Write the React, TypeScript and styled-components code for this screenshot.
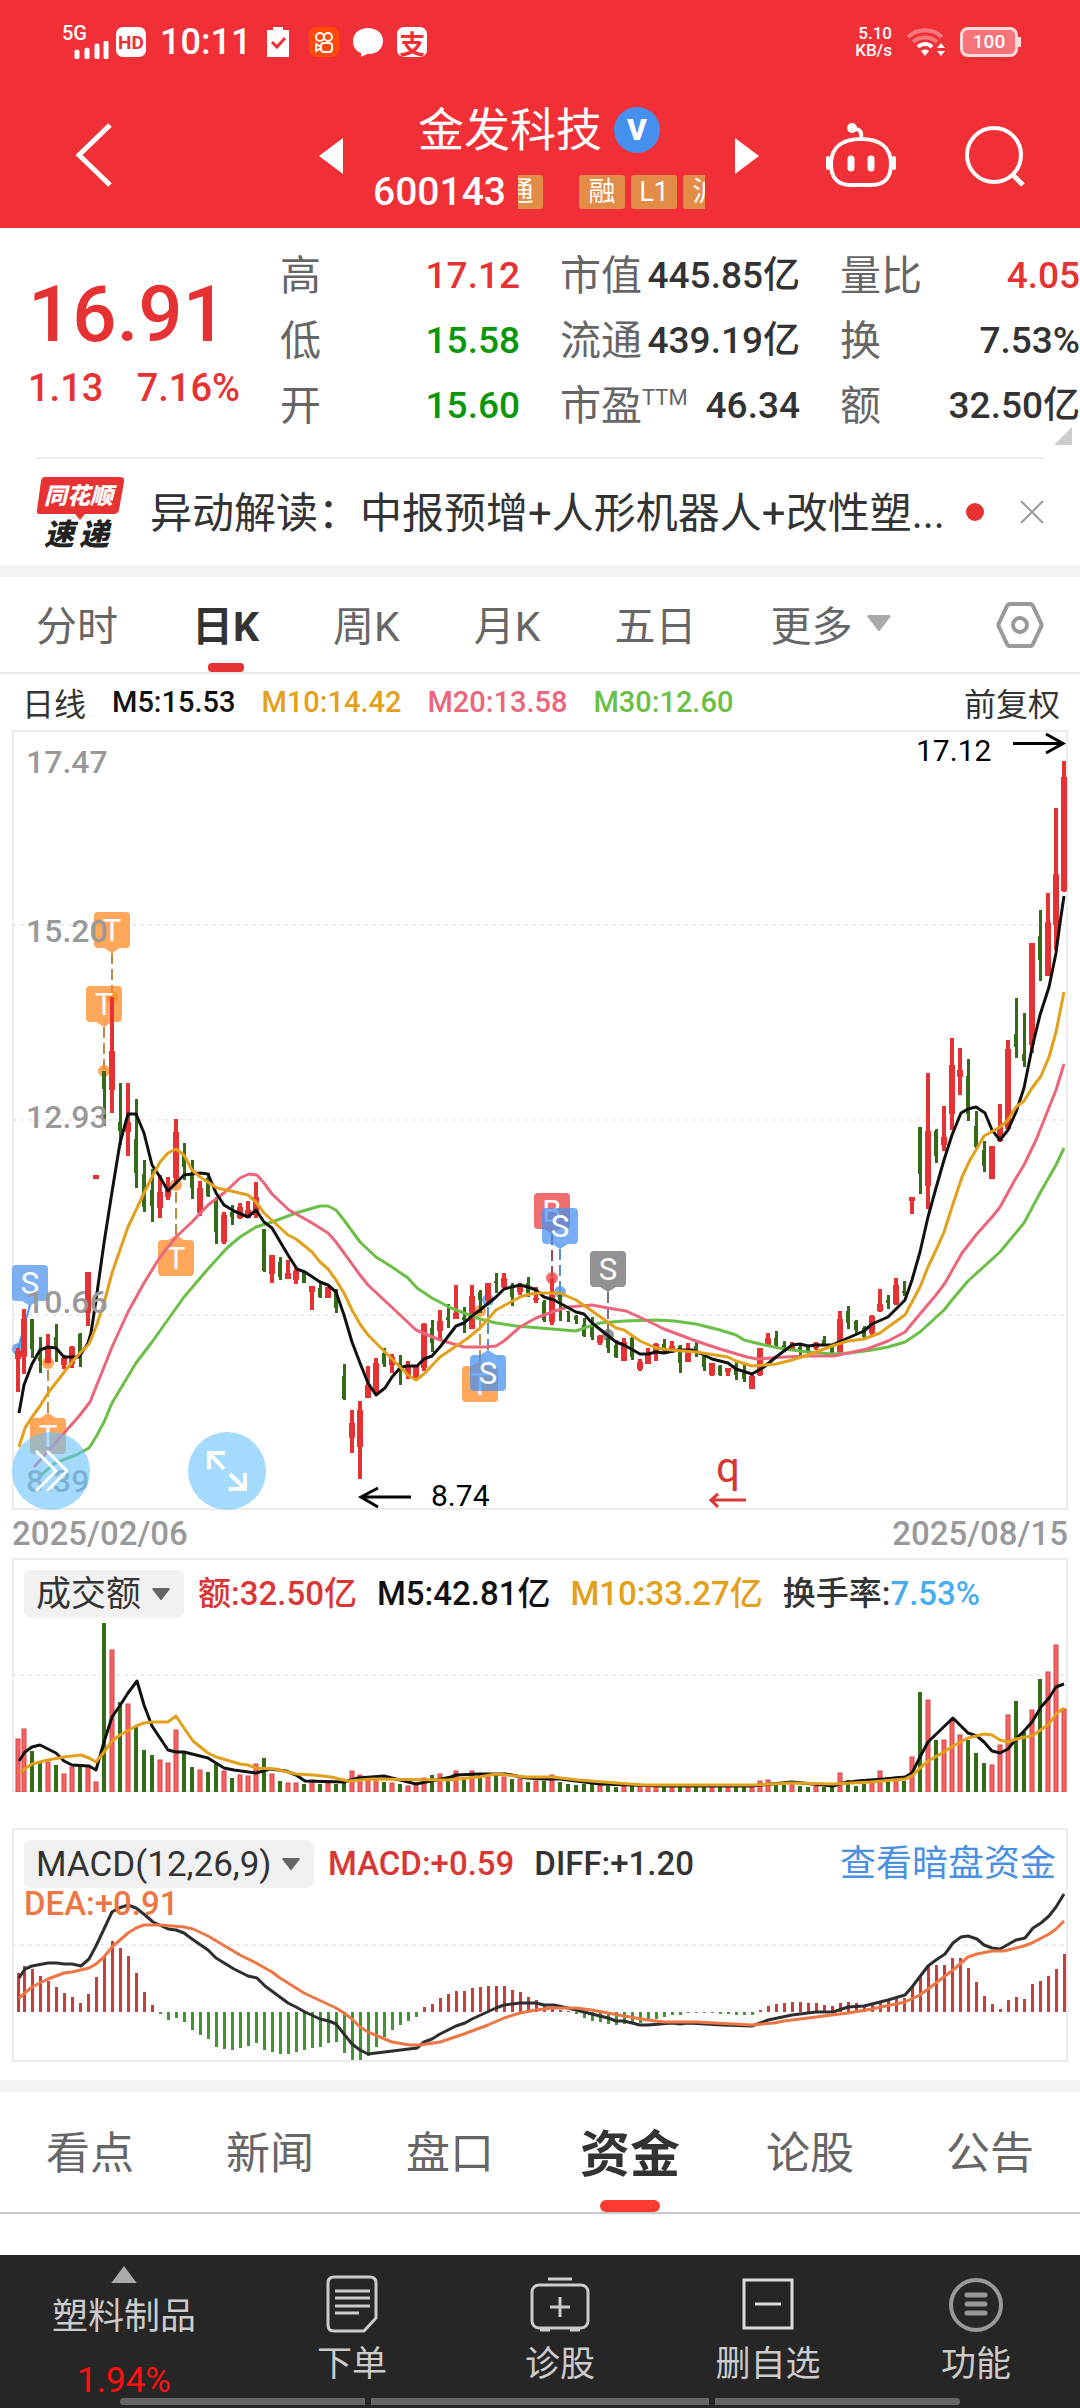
import styled, { createGlobalStyle } from "styled-components";

const RED = "#e63232";
const GREEN = "#336b17";

// [rising, high, body top, body bottom, low, turnover, macd]
type Candle = [number, number, number, number, number, number, number];

const candles: Candle[] = [
	[1, 617, 620, 628, 661, 53, 39], [1, 578, 588, 626, 643, 63, 46], [0, 588, 588, 618, 627, 41, 43],
	[0, 606, 626, 630, 642, 29, 36], [1, 603, 617, 632, 632, 30, 31], [0, 593, 606, 618, 631, 27, 25],
	[1, 624, 627, 634, 638, 18, 19], [1, 615, 616, 633, 637, 25, 15], [0, 602, 603, 625, 636, 27, 9],
	[1, 541, 541, 582, 595, 25, 18], [1, 444, 444, 448, 448, 10, 35], [0, 340, 340, 358, 395, 169, 57],
	[1, 266, 320, 359, 382, 142, 71], [0, 352, 391, 400, 414, 90, 64], [1, 352, 391, 401, 425, 88, 56],
	[0, 368, 408, 442, 457, 66, 39], [0, 429, 443, 476, 481, 42, 20], [0, 438, 459, 475, 491, 37, 7],
	[1, 444, 461, 477, 487, 32, -2], [1, 446, 457, 466, 469, 29, -8], [1, 388, 401, 447, 451, 62, -6],
	[0, 412, 421, 436, 449, 39, -10], [0, 429, 442, 457, 468, 25, -18], [1, 450, 457, 482, 485, 22, -23],
	[0, 442, 447, 465, 466, 20, -27], [0, 466, 469, 501, 513, 28, -35], [1, 481, 484, 511, 513, 21, -37],
	[0, 474, 481, 486, 494, 14, -38], [1, 472, 476, 487, 488, 17, -36], [1, 470, 479, 487, 487, 16, -34],
	[1, 451, 466, 484, 487, 28, -31], [0, 498, 498, 540, 541, 34, -38], [1, 524, 524, 543, 552, 18, -40],
	[0, 526, 531, 546, 549, 11, -42], [1, 529, 542, 548, 548, 9, -42], [1, 536, 540, 549, 553, 9, -40],
	[0, 541, 541, 552, 552, 8, -38], [1, 555, 555, 561, 579, 12, -36], [0, 552, 557, 566, 567, 8, -35],
	[1, 556, 556, 567, 567, 9, -31], [0, 558, 559, 577, 582, 8, -30], [0, 633, 645, 668, 669, 10, -41],
	[1, 679, 692, 707, 722, 21, -48], [1, 670, 679, 716, 748, 17, -48], [1, 635, 654, 667, 667, 14, -44],
	[1, 627, 632, 662, 664, 13, -35], [0, 617, 622, 633, 636, 10, -25], [1, 623, 626, 634, 642, 9, -18],
	[0, 624, 632, 635, 654, 8, -13], [1, 630, 636, 644, 648, 6, -9], [1, 635, 635, 647, 648, 7, -5],
	[1, 592, 593, 637, 640, 14, 5], [0, 589, 597, 612, 621, 17, 8], [1, 579, 590, 600, 609, 18, 14],
	[0, 573, 586, 589, 597, 13, 18], [1, 554, 582, 588, 588, 21, 21], [0, 576, 586, 589, 602, 15, 21],
	[1, 554, 565, 598, 598, 21, 24], [0, 559, 561, 569, 582, 17, 25], [1, 552, 552, 569, 571, 15, 26],
	[0, 542, 550, 552, 562, 17, 26], [1, 542, 547, 556, 557, 15, 26], [0, 552, 554, 566, 575, 13, 22],
	[1, 552, 556, 561, 564, 13, 20], [0, 546, 552, 562, 566, 10, 15], [1, 556, 567, 569, 572, 11, 12],
	[0, 569, 571, 589, 591, 11, 7], [1, 547, 564, 591, 594, 17, 4], [0, 562, 564, 569, 590, 10, 2],
	[0, 580, 580, 581, 591, 8, 1], [0, 584, 585, 589, 593, 7, -2], [0, 587, 594, 605, 606, 8, -6],
	[0, 586, 594, 606, 609, 8, -9], [1, 604, 605, 612, 614, 7, -10], [0, 604, 607, 617, 622, 6, -12],
	[0, 609, 614, 626, 627, 5, -13], [1, 607, 611, 630, 630, 6, -12], [0, 606, 607, 626, 629, 6, -11],
	[1, 628, 631, 638, 640, 7, -11], [1, 617, 622, 633, 633, 6, -9], [1, 612, 613, 622, 630, 6, -7],
	[0, 608, 613, 620, 621, 5, -5], [1, 610, 615, 620, 622, 7, -3], [0, 614, 615, 632, 642, 5, -3],
	[1, 612, 619, 631, 631, 6, -1], [0, 609, 615, 622, 626, 6, -1], [0, 622, 625, 636, 640, 6, -1],
	[1, 632, 632, 644, 645, 5, -1], [0, 634, 635, 644, 645, 5, -2], [1, 637, 637, 641, 645, 5, -2],
	[0, 630, 634, 644, 649, 5, -3], [0, 633, 642, 648, 651, 5, -3], [1, 644, 645, 658, 658, 5, -3],
	[1, 617, 617, 644, 645, 11, 2], [1, 602, 607, 614, 614, 12, 6], [0, 600, 607, 614, 616, 7, 8],
	[0, 610, 614, 619, 621, 7, 9], [1, 611, 614, 619, 620, 7, 10], [0, 614, 616, 619, 624, 6, 10],
	[0, 614, 616, 622, 624, 5, 9], [1, 611, 612, 617, 619, 6, 9], [0, 605, 609, 613, 614, 5, 7],
	[0, 614, 616, 622, 622, 5, 6], [1, 580, 588, 621, 622, 19, 9], [0, 575, 580, 592, 598, 12, 10],
	[0, 589, 590, 599, 602, 6, 9], [0, 595, 597, 606, 607, 8, 7], [1, 584, 585, 602, 604, 9, 9],
	[1, 558, 573, 580, 581, 21, 10], [0, 564, 569, 572, 578, 10, 11], [1, 547, 554, 573, 574, 15, 14],
	[0, 550, 560, 562, 565, 11, 14], [1, 466, 466, 470, 483, 35, 25], [0, 396, 396, 443, 463, 100, 36],
	[1, 342, 400, 455, 478, 92, 46], [0, 398, 400, 425, 432, 52, 47], [1, 375, 406, 414, 420, 52, 47],
	[1, 307, 334, 383, 399, 73, 54], [1, 317, 339, 346, 364, 57, 54], [0, 328, 345, 383, 390, 52, 44],
	[0, 380, 395, 416, 417, 39, 30], [0, 410, 419, 435, 441, 29, 16], [1, 415, 415, 448, 448, 27, 8],
	[1, 373, 396, 410, 411, 47, 3], [1, 309, 318, 398, 398, 77, 12], [0, 267, 303, 316, 327, 91, 15],
	[0, 282, 323, 330, 336, 60, 13], [1, 212, 212, 314, 322, 82, 28], [0, 179, 205, 229, 250, 113, 31],
	[1, 162, 191, 245, 245, 120, 36], [1, 77, 143, 194, 219, 147, 43], [1, 30, 46, 160, 161, 83, 58],
];

const priceLines = [
	{
		color: "#6bbf47",
		points:
			"28,745 43,732 64,724 77,717 84,706 92,691 100,672 124,632 140,611 172,566 195,539 215,517 228,506 244,496 260,491 284,482 308,475 316,475 324,479 332,489 348,511 364,526 380,536 396,547 405,557 420,567 439,577 468,588 484,592 504,595 528,597 564,600 572,597 588,592 612,590 644,589 662,590 684,593 708,599 724,604 732,609 748,613 772,618 796,621 820,623 838,622 860,619 876,616 893,611 908,601 932,579 940,569 956,550 988,521 1012,492 1028,462 1044,434 1052,417",
	},
	{
		color: "#eb667b",
		points:
			"22,736 53,701 68,684 78,671 84,656 100,616 116,581 132,552 148,526 164,506 180,491 196,474 212,462 228,447 237,443 245,444 252,452 260,463 277,479 300,492 316,502 324,511 348,544 356,554 372,569 387,583 404,599 428,609 452,616 474,616 484,615 492,610 508,596 524,587 540,581 556,576 580,574 596,577 614,580 636,590 652,598 684,610 708,618 735,626 745,628 772,626 796,625 822,625 836,622 855,618 876,610 893,601 908,583 924,564 933,552 950,522 964,504 980,486 988,476 1004,447 1012,434 1024,409 1034,384 1044,359 1052,333",
	},
	{
		color: "#111",
		points:
			"7,682 12,654 20,633 28,619 36,616 44,617 52,626 67,626 76,612 79,602 84,569 92,512 100,461 108,412 116,383 124,383 132,402 140,434 148,446 156,460 164,452 172,444 188,442 196,443 204,462 212,474 222,480 236,486 244,479 252,491 260,497 276,524 285,538 293,541 308,551 316,554 324,561 332,584 340,611 348,632 356,652 364,664 373,657 380,646 388,637 394,635 405,635 412,628 420,625 428,616 444,595 452,592 460,585 468,579 484,566 492,558 508,554 516,556 524,559 532,566 542,569 564,581 572,583 580,592 604,611 612,614 628,623 636,623 644,621 652,622 666,619 680,619 690,623 700,628 716,632 724,638 740,643 752,636 764,626 780,614 788,613 796,615 804,614 820,614 836,607 852,600 860,593 876,586 893,569 900,549 908,521 916,486 924,457 932,429 940,404 949,382 956,378 964,376 973,382 980,399 988,409 996,399 1004,381 1012,357 1020,317 1028,284 1037,256 1044,222 1048,192 1052,165",
	},
	{
		color: "#e2a01b",
		points:
			"7,716 13,697 20,686 28,675 36,662 60,631 68,622 77,613 84,596 92,572 100,542 116,496 132,462 140,446 148,431 156,422 164,418 172,424 180,439 188,446 205,457 219,460 236,464 244,471 252,482 263,492 276,504 284,508 300,521 308,531 316,538 324,549 332,562 340,579 348,593 356,604 372,620 388,636 396,644 404,649 412,643 428,626 456,607 468,597 484,579 508,566 518,563 528,562 548,562 564,569 580,580 604,597 612,599 628,610 644,617 659,619 684,621 716,626 724,630 740,635 764,633 780,629 796,624 804,621 820,615 836,610 852,608 868,602 876,596 893,584 900,571 908,556 916,536 924,519 932,501 940,476 950,446 958,429 964,419 972,405 988,396 996,389 1004,376 1012,370 1020,357 1029,345 1037,326 1044,301 1052,261",
	},
];

const volumeLines = [
	{
		color: "#111",
		points:
			"7,202 13,193 20,188 28,186 36,190 44,194 52,202 60,206 77,207 84,211 92,183 100,158 109,145 116,134 125,122 132,146 140,167 156,191 164,193 172,193 196,199 212,209 222,211 244,214 258,210 274,212 284,216 293,222 332,223 346,219 372,217 404,225 439,218 444,216 467,215 494,215 515,219 532,220 548,220 588,225 649,227 740,227 780,223 821,227 831,224 845,222 872,220 893,218 900,214 908,198 916,183 941,159 956,174 965,177 972,183 980,192 988,194 996,190 1004,180 1012,172 1020,163 1029,148 1037,139 1044,128 1052,125",
	},
	{
		color: "#e2a01b",
		points:
			"7,214 20,205 36,201 52,198 69,196 77,199 84,203 92,193 100,182 108,176 124,167 132,164 140,163 156,163 164,157 172,169 181,182 196,194 204,198 228,205 236,206 244,209 263,210 284,215 301,216 319,218 336,222 360,220 436,221 467,218 484,215 515,218 540,218 566,221 631,226 741,226 780,224 821,225 859,223 893,220 900,217 908,209 916,202 932,193 941,187 956,179 972,175 980,176 988,181 996,183 1004,180 1020,177 1037,165 1044,155 1052,149",
	},
];

const macdLines = [
	{
		color: "#2e2e2e",
		points:
			"7,149 13,140 20,137 36,134 45,134 52,135 60,135 69,137 77,130 84,117 92,100 100,83 107,79 116,76 124,79 133,86 141,93 156,100 164,101 172,104 180,110 196,121 204,129 222,140 236,147 245,149 253,157 276,174 284,178 293,183 308,190 317,192 324,195 340,215 348,221 356,225 405,219 412,213 420,210 428,205 444,197 453,194 460,190 484,179 492,176 508,174 524,174 532,176 542,176 556,179 572,183 596,189 604,192 612,192 628,196 636,196 660,194 668,195 676,194 710,196 740,197 756,191 780,186 804,183 821,183 836,178 852,177 876,171 893,166 900,158 916,137 924,131 933,125 941,114 949,108 956,107 965,110 972,116 980,119 988,120 1004,111 1013,109 1021,99 1029,94 1037,87 1044,78 1052,65",
	},
	{
		color: "#ec7644",
		points:
			"7,169 20,158 36,150 52,144 60,143 77,139 84,135 92,128 100,118 116,104 124,99 132,96 148,96 172,98 181,100 196,107 228,126 244,134 260,143 268,149 292,164 324,179 332,184 340,190 348,198 356,203 380,213 398,216 408,216 428,213 452,205 476,196 492,189 508,184 524,181 540,179 564,179 580,181 612,187 636,191 652,193 684,193 740,196 762,194 772,192 804,188 836,184 860,180 893,173 908,166 916,160 941,141 956,128 965,125 980,122 992,122 1012,117 1020,114 1037,105 1044,100 1052,92",
	},
];

const axisLabels = [
	{ text: "17.47", y: 42 },
	{ text: "15.20", y: 211 },
	{ text: "12.93", y: 397 },
	{ text: "10.66", y: 582 },
	{ text: "8.39", y: 761 },
];

const markers = [
	{ letter: "T", x: 100, y: 181, dot: 266, color: "#ff8a24", line: "#bf8a45" },
	{ letter: "T", x: 92, y: 255, dot: 340, color: "#ff8a24", line: "#bf8a45" },
	{ letter: "T", x: 164, y: 509, dot: 454, color: "#ff8a24", line: "#bf8a45" },
	{ letter: "T", x: 36, y: 687, dot: 632, color: "#ff8a24", line: "#bf8a45" },
	{ letter: "T", x: 468, y: 635, dot: 580, color: "#ff8a24", line: "#bf8a45" },
	{ letter: "S", x: 476, y: 624, dot: 569, color: "#4a92ee", line: "#5590bf" },
	{ letter: "B", x: 540, y: 462, dot: 547, color: "#ea3f42", line: "#a04a4a" },
	{ letter: "S", x: 548, y: 477, dot: 561, color: "#4a92ee", line: "#5590bf" },
	{ letter: "S", x: 596, y: 520, dot: 604, color: "#6e6e6e", line: "#777" },
];

const Marker = ({ letter, x, y, dot, color, line }: (typeof markers)[number]) => {
	const above = dot > y;
	const edge = above ? y + 36 : y;
	const tip = above ? edge + 5 : edge - 5;
	return (
		<g>
			<line x1={x} y1={tip} x2={x} y2={dot} stroke={line} strokeWidth="2" strokeDasharray="11 5" />
			<circle cx={x} cy={dot} r="6" fill={color} opacity="0.75" />
			<rect x={x - 18} y={y} width="36" height="36" rx="4" fill={color} opacity="0.75" />
			<path d={`M${x - 8} ${edge}H${x + 8}L${x} ${tip}Z`} fill={color} opacity="0.75" />
			<ChartText x={x} y={y + 29} fontSize="31" fill="#fff" textAnchor="middle">
				{letter}
			</ChartText>
		</g>
	);
};

const Lines = ({ lines }: { lines: typeof priceLines }) => (
	<>
		{lines.map((line) => (
			<polyline
				key={line.color}
				points={line.points}
				fill="none"
				stroke={line.color}
				strokeWidth="3"
				strokeLinejoin="round"
			/>
		))}
	</>
);

const Frame = ({ height, guides }: { height: number; guides: number[] }) => (
	<>
		{guides.map((y) => (
			<line key={y} x1="0" y1={y} x2="1054" y2={y} stroke="#ececec" strokeWidth="2" strokeDasharray="4 4" />
		))}
		<rect x="1" y="0" width="1054" height={height} fill="none" stroke="#ececec" strokeWidth="2" />
	</>
);

const xOf = (i: number) => (i === 0 ? 6 : 4 + i * 8);

const PriceChart = () => (
	<Chart viewBox="0 -1 1056 780" role="img" aria-label="日K">
		<Frame height={778} guides={[194, 389, 584]} />
		<line x1="18" y1="574" x2="6" y2="618" stroke="#4a92ee" strokeWidth="2" />
		<circle cx="6" cy="618" r="6" fill="#4a92ee" opacity="0.75" />
		<rect x="0" y="534" width="36" height="36" rx="4" fill="#4a92ee" opacity="0.72" />
		<path d="M10 570H26L18 575Z" fill="#4a92ee" opacity="0.72" />
		<ChartText x="18" y="563" fontSize="31" fill="#fff" textAnchor="middle">
			S
		</ChartText>
		{markers.map((marker) => (
			<Marker key={marker.x} {...marker} />
		))}
		{candles.map(([up, high, top, bottom, low], i) => {
			const color = up ? RED : GREEN;
			const width = up ? 6 : 4;
			return (
				<g key={i} fill={color}>
					<rect x={xOf(i) - (up ? 2 : 1)} y={high} width={up ? 4 : 3} height={low - high} />
					<rect x={xOf(i) - width / 2} y={top} width={width} height={bottom - top} />
				</g>
			);
		})}
		<Lines lines={priceLines} />
		{axisLabels.map((label) => (
			<ChartText key={label.text} x="14" y={label.y} fontSize="32" fontWeight="500" fill="#999">
				{label.text}
			</ChartText>
		))}
		<ChartText x="904" y="30" fontSize="30" fill="#000">
			17.12
		</ChartText>
		<path d="M1001 12.5H1051M1034 3L1051 12.5L1034 22" fill="none" stroke="#000" strokeWidth="3" />
		<ChartText x="419" y="775" fontSize="30" fill="#000">
			8.74
		</ChartText>
		<path d="M399 766H349M366 757L349 766L366 776" fill="none" stroke="#000" strokeWidth="3" />
		<ChartText x="704" y="751" fontSize="42" fill="#d93636">
			q
		</ChartText>
		<path d="M734 769H699M706 763L699 769L706 776" fill="none" stroke="#d93636" strokeWidth="3" />
	</Chart>
);

const VolumeChart = () => (
	<Chart viewBox="0 -1 1056 234" role="img" aria-label="成交额">
		<Frame height={232} guides={[116]} />
		{candles.map(([up, , , , , volume], i) =>
			up ? (
				<rect
					key={i}
					x={xOf(i) - 2}
					y={233 - volume}
					width="4"
					height={volume}
					fill="#ff5f5f"
					stroke="#c94a4a"
					strokeWidth="1"
				/>
			) : (
				<rect key={i} x={xOf(i) - 2} y={233 - volume} width="4" height={volume} fill={GREEN} />
			)
		)}
		<Lines lines={volumeLines} />
	</Chart>
);

const MacdChart = () => (
	<Chart viewBox="0 -1 1056 234" role="img" aria-label="MACD">
		<Frame height={232} guides={[116]} />
		{candles.map(([, , , , , , macd], i) => (
			<rect
				key={i}
				x={xOf(i) - 1}
				y={macd > 0 ? 183 - macd : 183}
				width="3"
				height={Math.abs(macd)}
				fill={macd > 0 ? "#c93c3c" : "#409630"}
			/>
		))}
		<Lines lines={macdLines} />
	</Chart>
);

const Caret = ({ width = 18, color = "#666", up = false }) => (
	<svg width={width} height={(width * 2) / 3} viewBox="0 0 18 12" aria-hidden="true">
		<path d={up ? "M0 12L9 0L18 12Z" : "M1 0H17L18 1L9.500 12H8.500L0 1Z"} fill={color} />
	</svg>
);

const Status = () => (
	<StatusBar>
		<StatusGroup>
			<Signal>
				<span>5G</span>
				<svg width="36" height="18" viewBox="0 0 36 18" aria-hidden="true">
					<path d="M3 16V11M13 16V9M23 16V5M32 16V2" stroke="#fff" strokeWidth="5" strokeLinecap="round" />
				</svg>
			</Signal>
			<AppBadge>HD</AppBadge>
			<Clock>10:11</Clock>
			<svg width="22" height="30" viewBox="0 0 22 30" aria-hidden="true">
				<path d="M0 3H6V0H16V3H22V30H0Z" fill="#fff" />
				<path d="M5 15L10 20L18 11" fill="none" stroke="#f02f37" strokeWidth="3" />
			</svg>
			<KwaiIcon width="30" height="30" viewBox="0 0 30 30" aria-hidden="true">
				<rect width="30" height="30" rx="8" fill="#ff4a08" />
				<g fill="none" stroke="#fff" strokeWidth="2">
					<circle cx="11" cy="10" r="4" />
					<circle cx="19" cy="10" r="4" />
					<rect x="12" y="16" width="11" height="9" rx="3" />
					<path d="M12 20L7 17V24L12 21" />
				</g>
			</KwaiIcon>
			<svg width="30" height="30" viewBox="0 0 30 30" aria-hidden="true">
				<path d="M15 1C7 1 0 6 0 14C0 20 3 24 8 26V30L14 27C23 28 30 22 30 14C30 6 23 1 15 1Z" fill="#fff" />
			</svg>
			<AppBadge $wide>支</AppBadge>
		</StatusGroup>
		<StatusGroup>
			<Speed>
				<span>5.10</span>
				<span>KB/s</span>
			</Speed>
			<svg width="40" height="30" viewBox="0 0 40 30" aria-hidden="true">
				<g fill="none" stroke="#fff" strokeWidth="4">
					<path d="M2 10C11 1 27 1 36 10" opacity="0.35" />
					<path d="M7 15C14 9 24 9 31 15" opacity="0.35" />
					<path d="M12 20C16 16 22 16 26 20" />
				</g>
				<path d="M15 24C17 22 21 22 23 24L19 29Z" fill="#fff" />
				<path d="M31 21L35 16L39 21ZM31 24H39L35 29Z" fill="#fff" />
			</svg>
			<Battery>100</Battery>
		</StatusGroup>
	</StatusBar>
);

const Header = () => (
	<TitleBar>
		<IconButton aria-label="返回">
			<svg width="38" height="66" viewBox="0 0 38 66">
				<path d="M35 2L4 32L35 62" fill="none" stroke="#fff" strokeWidth="5" />
			</svg>
		</IconButton>
		<StockNav>
			<IconButton aria-label="上一只">
				<svg width="24" height="36" viewBox="0 0 24 36">
					<path d="M24 0V36L0 18Z" fill="#fff" />
				</svg>
			</IconButton>
			<StockTitle>
				<StockName>
					金发科技<Verified>V</Verified>
				</StockName>
				<StockCode>
					600143
					<Ticker>
						<Tag>通</Tag>
						<Tag>融</Tag>
						<Tag>L1</Tag>
						<Tag>沪</Tag>
					</Ticker>
				</StockCode>
			</StockTitle>
			<IconButton aria-label="下一只">
				<svg width="24" height="36" viewBox="0 0 24 36">
					<path d="M0 0V36L24 18Z" fill="#fff" />
				</svg>
			</IconButton>
		</StockNav>
		<Actions>
			<IconButton aria-label="智能助手">
				<svg width="70" height="66" viewBox="0 0 70 66">
					<g fill="none" stroke="#fff" strokeWidth="4" strokeLinecap="round">
						<path d="M35 16C52 16 65 23 65 41C65 56 57 62 46 62H24C13 62 5 56 5 41C5 23 18 16 35 16Z" />
						<path d="M35 15C36 9 34 6 28 6" />
						<path d="M2 35V45M68 35V45" />
						<path d="M25 36V45M45 36V45" strokeWidth="7" />
					</g>
					<circle cx="26" cy="5" r="5" fill="#fff" />
				</svg>
			</IconButton>
			<IconButton aria-label="搜索">
				<svg width="60" height="62" viewBox="0 0 60 62">
					<circle cx="29" cy="30" r="27" fill="none" stroke="#fff" strokeWidth="4" />
					<path d="M47 49L58 60" stroke="#fff" strokeWidth="5" />
				</svg>
			</IconButton>
		</Actions>
	</TitleBar>
);

const Quotes = () => (
	<QuotePanel>
		<PriceBlock>
			<Price>16.91</Price>
			<Change>
				<span>1.13</span>
				<span>7.16%</span>
			</Change>
		</PriceBlock>
		<StatColumn>
			<Stat>
				<dt>高</dt>
				<StatValue $color={RED}>17.12</StatValue>
			</Stat>
			<Stat>
				<dt>低</dt>
				<StatValue $color="#0a960a">15.58</StatValue>
			</Stat>
			<Stat>
				<dt>开</dt>
				<StatValue $color="#0a960a">15.60</StatValue>
			</Stat>
		</StatColumn>
		<StatColumn>
			<Stat>
				<dt>市值</dt>
				<StatValue>445.85亿</StatValue>
			</Stat>
			<Stat>
				<dt>流通</dt>
				<StatValue>439.19亿</StatValue>
			</Stat>
			<Stat>
				<dt>
					市盈<Sup>TTM</Sup>
				</dt>
				<StatValue>46.34</StatValue>
			</Stat>
		</StatColumn>
		<StatColumn>
			<Stat>
				<dt>量比</dt>
				<StatValue $color={RED}>4.05</StatValue>
			</Stat>
			<Stat>
				<dt>换</dt>
				<StatValue>7.53%</StatValue>
			</Stat>
			<Stat>
				<dt>额</dt>
				<StatValue>32.50亿</StatValue>
			</Stat>
		</StatColumn>
		<Corner />
	</QuotePanel>
);

const News = () => (
	<NewsRow>
		<svg width="90" height="76" viewBox="0 0 90 76" role="img" aria-label="同花顺速递">
			<path d="M9 3H84Q89 3 88 8L83 36Q82 40 78 40H49L44 46L39 40H4Q0 40 1 36L5 7Q6 3 9 3Z" fill={RED} />
			<LogoText x="8" y="30" fontSize="23" fill="#fff">
				同花顺
			</LogoText>
			<LogoText x="8" y="71" fontSize="30" fill="#222">
				速
			</LogoText>
			<LogoText x="43" y="71" fontSize="30" fill="#222">
				递
			</LogoText>
		</svg>
		<NewsLink href="#news">异动解读：中报预增+人形机器人+改性塑...</NewsLink>
		<Dot />
		<IconButton aria-label="关闭">
			<svg width="24" height="24" viewBox="0 0 24 24">
				<path d="M1 1L23 23M23 1L1 23" stroke="#999" strokeWidth="2" />
			</svg>
		</IconButton>
	</NewsRow>
);

const periods = ["分时", "日K", "周K", "月K", "五日"];
const sections = ["看点", "新闻", "盘口", "资金", "论股", "公告"];

const App = () => {
	return (
		<Page>
			<GlobalStyle />
			<Top>
				<Status />
				<Header />
			</Top>
			<Quotes />
			<News />
			<Band />
			<PeriodTabs>
				{periods.map((period) => (
					<PeriodTab key={period} $active={period === "日K"}>
						{period}
					</PeriodTab>
				))}
				<PeriodTab aria-haspopup="menu">
					更多
					<Caret width={24} color="#aaa" />
				</PeriodTab>
				<Settings aria-label="设置">
					<svg width="48" height="48" viewBox="0 0 48 48">
						<path
							d="M14 3H34Q36 3 37 5L45 22Q46 24 45 26L37 43Q36 45 34 45H14Q12 45 11 43L3 26Q2 24 3 22L11 5Q12 3 14 3Z"
							fill="none"
							stroke="#999"
							strokeWidth="4"
						/>
						<circle cx="24" cy="24" r="7" fill="none" stroke="#999" strokeWidth="4" />
					</svg>
				</Settings>
			</PeriodTabs>
			<Averages>
				<DayLabel>日线</DayLabel>
				<Label $color="#111">M5:15.53</Label>
				<Label $color="#e2a01b">M10:14.42</Label>
				<Label $color="#eb667b">M20:13.58</Label>
				<Label $color="#6bbf47">M30:12.60</Label>
				<Adjust>前复权</Adjust>
			</Averages>
			<Panels>
				<Panel>
					<PriceChart />
					<FloatButtons>
						<FloatButton aria-label="展开">
							<svg width="34" height="44" viewBox="0 0 34 44">
								<path d="M2 2L22 22L2 42M13 2L33 22L13 42" fill="none" stroke="#fff" strokeWidth="3" />
							</svg>
						</FloatButton>
						<FloatButton aria-label="全屏">
							<svg width="40" height="40" viewBox="0 0 40 40">
								<path
									d="M2 18V2H18M2 2L17 18M38 22V38H22M38 38L23 23"
									fill="none"
									stroke="#fff"
									strokeWidth="4"
								/>
							</svg>
						</FloatButton>
					</FloatButtons>
				</Panel>
				<Dates>
					<span>2025/02/06</span>
					<span>2025/08/15</span>
				</Dates>
				<Panel>
					<VolumeChart />
					<Legend>
						<Picker>
							<select aria-label="副图指标一">
								<option>成交额</option>
							</select>
							<Caret />
						</Picker>
						<LegendItem $color="#d93636">额:32.50亿</LegendItem>
						<LegendItem $color="#111">M5:42.81亿</LegendItem>
						<LegendItem $color="#e2a01b">M10:33.27亿</LegendItem>
						<LegendItem $color="#333">
							换手率:<Blue>7.53%</Blue>
						</LegendItem>
					</Legend>
				</Panel>
				<Spacer />
				<Panel>
					<MacdChart />
					<Legend>
						<Picker>
							<select aria-label="副图指标二">
								<option>MACD(12,26,9)</option>
							</select>
							<Caret />
						</Picker>
						<LegendItem $color="#d93636">MACD:+0.59</LegendItem>
						<LegendItem $color="#333">DIFF:+1.20</LegendItem>
						<DarkPool href="#dark-pool">查看暗盘资金</DarkPool>
						<Dea>DEA:+0.91</Dea>
					</Legend>
				</Panel>
			</Panels>
			<Band />
			<SectionTabs>
				{sections.map((section) => (
					<SectionTab key={section} $active={section === "资金"}>
						{section}
					</SectionTab>
				))}
			</SectionTabs>
			<BottomBar>
				<BottomNav>
					<Sector>
						<Caret width={26} color="#aaa" up />
						<span>塑料制品</span>
						<SectorChange>1.94%</SectorChange>
					</Sector>
					<NavButton>
						<svg width="52" height="58" viewBox="0 0 52 58" aria-hidden="true">
							<g fill="none" stroke="#ccc" strokeWidth="3">
								<path d="M8 2H44Q50 2 50 8V43L38 56H8Q2 56 2 50V8Q2 2 8 2Z" />
								<path d="M9 16H44M9 23H44M9 31H44M9 38H33" />
							</g>
						</svg>
						下单
					</NavButton>
					<NavButton>
						<svg width="60" height="58" viewBox="0 0 60 58" aria-hidden="true">
							<g fill="none" stroke="#ccc" strokeWidth="3">
								<rect x="2" y="10" width="56" height="43" rx="7" />
								<path d="M18 4H42M30 22V42M20 32H40M10 55H20M40 55H50" />
							</g>
						</svg>
						诊股
					</NavButton>
					<NavButton>
						<svg width="52" height="58" viewBox="0 0 52 58" aria-hidden="true">
							<path d="M2 5H50V53H2ZM13 29H39" fill="none" stroke="#ddd" strokeWidth="3" />
						</svg>
						删自选
					</NavButton>
					<NavButton>
						<svg width="54" height="58" viewBox="0 0 54 58" aria-hidden="true">
							<circle cx="27" cy="30" r="25" fill="none" stroke="#999" strokeWidth="4" />
							<path d="M18 20H36M18 29H36M18 38H36" stroke="#999" strokeWidth="5" strokeLinecap="round" />
						</svg>
						功能
					</NavButton>
				</BottomNav>
				<HomeBar>
					<HomeSegment $grow={245} />
					<HomeSegment $grow={338} />
					<HomeSegment $grow={245} />
				</HomeBar>
			</BottomBar>
		</Page>
	);
};

const GlobalStyle = createGlobalStyle`
	* {
		box-sizing: border-box;
	}

	body {
		margin: 0;
		background: #fff;
		color: #333;
		font-family: Roboto, "Noto Sans CJK SC", sans-serif;
	}

	button,
	select {
		border: 0;
		padding: 0;
		background: none;
		color: inherit;
		font: inherit;
	}

	svg {
		flex-shrink: 0;
	}
`;

const Page = styled.div`
	display: flex;
	flex-direction: column;
	min-height: 100vh;
`;

const Top = styled.header`
	background: #f02f37;
	color: #fff;
`;

const StatusBar = styled.div`
	display: flex;
	justify-content: space-between;
	align-items: center;
	height: 84px;
	padding: 0 62px;
`;

const StatusGroup = styled.div`
	display: flex;
	align-items: center;
	gap: 14px;
`;

const Signal = styled.div`
	display: flex;
	flex-direction: column;
	font-size: 20px;
	font-weight: 500;
	line-height: 16px;

	& svg {
		margin-left: 12px;
	}
`;

const AppBadge = styled.span<{ $wide?: boolean }>`
	display: flex;
	align-items: center;
	justify-content: center;
	width: 30px;
	height: 30px;
	margin-left: ${(props) => (props.$wide ? "0" : "-8px")};
	border-radius: 7px;
	background: #fff;
	color: #f02f37;
	font-size: ${(props) => (props.$wide ? "26px" : "19px")};
	font-weight: 700;
`;

const Clock = styled.span`
	font-size: 36px;
	font-weight: 500;
	margin-right: 2px;
`;

const KwaiIcon = styled.svg`
	margin-left: 6px;
`;

const Speed = styled.div`
	display: flex;
	flex-direction: column;
	align-items: flex-end;
	font-size: 17px;
	font-weight: 500;
	line-height: 17px;
`;

const Battery = styled.div`
	position: relative;
	width: 58px;
	height: 30px;
	border: 3px solid #fbdcdd;
	border-radius: 8px;
	background: #f6747a;
	font-size: 19px;
	font-weight: 500;
	line-height: 24px;
	text-align: center;

	&::after {
		content: "";
		position: absolute;
		top: 7px;
		right: -6px;
		width: 3px;
		height: 10px;
		background: #fbdcdd;
	}
`;

const TitleBar = styled.div`
	display: grid;
	grid-template-columns: 1fr auto 1fr;
	align-items: center;
	height: 144px;
	padding: 0 55px 0 75px;
`;

const IconButton = styled.button`
	display: flex;
	justify-self: start;
`;

const StockNav = styled.div`
	display: flex;
	align-items: center;
	gap: 30px;
	margin-right: 22px;
`;

const StockTitle = styled.div`
	display: flex;
	flex-direction: column;
	align-items: center;
	gap: 6px;
	padding-top: 10px;
`;

const StockName = styled.h1`
	display: flex;
	align-items: center;
	gap: 12px;
	margin: 0;
	font-size: 46px;
	font-weight: 400;
	line-height: 56px;
`;

const Verified = styled.span`
	width: 46px;
	height: 46px;
	border-radius: 50%;
	background: #4590ee;
	font-size: 30px;
	font-weight: 900;
	line-height: 46px;
	text-align: center;
`;

const StockCode = styled.div`
	display: flex;
	align-items: center;
	gap: 12px;
	font-size: 39px;
	font-weight: 500;
	line-height: 56px;
`;

const Ticker = styled.div`
	display: flex;
	gap: 6px;
	width: 187px;
	overflow: hidden;
	white-space: nowrap;
`;

const Tag = styled.span`
	flex-shrink: 0;
	width: 46px;
	height: 34px;
	border-radius: 3px;
	background: #e28c48;
	font-size: 27px;
	font-weight: 400;
	line-height: 34px;
	text-align: center;

	&:first-child {
		margin: 0 30px 0 -21px;
	}
`;

const Actions = styled.div`
	display: flex;
	justify-content: flex-end;
	align-items: center;
	gap: 69px;
`;

const QuotePanel = styled.section`
	position: relative;
	display: grid;
	grid-template-columns: minmax(0, 212fr) repeat(3, minmax(0, 240fr));
	column-gap: 40px;
	padding: 15px 0 19px 28px;
`;

const PriceBlock = styled.div`
	display: flex;
	flex-direction: column;
	color: ${RED};
	font-weight: 500;
`;

const Price = styled.span`
	padding-top: 26px;
	font-size: 78px;
	line-height: 92px;
`;

const Change = styled.span`
	display: flex;
	justify-content: space-between;
	font-size: 38px;
	line-height: 54px;
`;

const StatColumn = styled.dl`
	margin: 0;
`;

const Stat = styled.div`
	display: flex;
	justify-content: space-between;
	align-items: center;
	height: 65px;
	color: #666;
	font-size: 41px;
	line-height: 60px;
	white-space: nowrap;
`;

const StatValue = styled.dd<{ $color?: string }>`
	margin: 0;
	color: ${(props) => props.$color || "#333"};
	font-size: 37px;
	font-weight: 500;
`;

const Sup = styled.sup`
	font-size: 22px;
	line-height: 22px;
`;

const Corner = styled.i`
	position: absolute;
	right: 8px;
	bottom: 12px;
	border: 9px solid transparent;
	border-right-color: #ccc;
	border-bottom-color: #ccc;
`;

const NewsRow = styled.section`
	display: flex;
	align-items: center;
	height: 108px;
	margin: 0 36px;
	border-top: 2px solid #eee;
`;

const LogoText = styled.text`
	font-family: "Noto Sans CJK SC", sans-serif;
	font-style: italic;
	font-weight: 900;
`;

const NewsLink = styled.a`
	flex: 1;
	margin-left: 24px;
	padding-bottom: 6px;
	color: #333;
	font-size: 42px;
	text-decoration: none;
	white-space: nowrap;
`;

const Dot = styled.i`
	width: 18px;
	height: 18px;
	margin-right: 36px;
	border-radius: 50%;
	background: ${RED};
`;

const Band = styled.div`
	height: 12px;
	background: #f4f4f4;
`;

const PeriodTabs = styled.nav`
	display: flex;
	gap: 74px;
	height: 97px;
	padding: 0 36px;
	border-bottom: 2px solid #e8e8e8;
`;

const PeriodTab = styled.button<{ $active?: boolean }>`
	position: relative;
	display: flex;
	align-items: center;
	gap: 14px;
	padding-bottom: 4px;
	color: ${(props) => (props.$active ? "#333" : "#666")};
	font-size: 41px;
	font-weight: ${(props) => (props.$active ? 700 : 400)};

	&::after {
		content: "";
		display: ${(props) => (props.$active ? "block" : "none")};
		position: absolute;
		bottom: 0;
		left: calc(50% - 18px);
		width: 36px;
		height: 9px;
		border-radius: 4px;
		background: ${RED};
	}
`;

const Settings = styled.button`
	display: flex;
	align-items: center;
	margin-left: auto;
`;

const Averages = styled.div`
	display: flex;
	align-items: center;
	gap: 26px;
	height: 56px;
	padding: 0 20px 0 22px;
`;

const DayLabel = styled.span`
	font-size: 32px;
`;

const Label = styled.span<{ $color: string }>`
	color: ${(props) => props.$color};
	font-size: 29px;
	font-weight: 500;
`;

const Adjust = styled.button`
	margin-left: auto;
	font-size: 32px;
`;

const Panels = styled.main`
	padding: 0 12px 18px;
`;

const Panel = styled.section`
	position: relative;
`;

const Chart = styled.svg`
	display: block;
	width: 100%;
	height: auto;
`;

const ChartText = styled.text`
	font-family: Roboto, sans-serif;
`;

const FloatButtons = styled.div`
	position: absolute;
	bottom: 0;
	left: 0;
	display: flex;
	gap: 98px;
`;

const FloatButton = styled.button`
	display: flex;
	align-items: center;
	justify-content: center;
	width: 78px;
	height: 78px;
	border-radius: 50%;
	background: rgba(105, 193, 255, 0.6);
`;

const Dates = styled.div`
	display: flex;
	justify-content: space-between;
	color: #999;
	font-size: 33px;
	font-weight: 500;
	line-height: 48px;
`;

const Legend = styled.div`
	position: absolute;
	top: 12px;
	left: 12px;
	right: 12px;
	display: flex;
	flex-wrap: wrap;
	align-items: center;
	column-gap: 20px;
`;

const Picker = styled.label`
	display: flex;
	align-items: center;
	gap: 10px;
	height: 48px;
	padding: 0 14px 0 12px;
	margin-right: -6px;
	border-radius: 6px;
	background: #f1f1f1;

	& select {
		appearance: none;
		font-size: 35px;
	}
`;

const LegendItem = styled.span<{ $color: string }>`
	color: ${(props) => props.$color};
	font-size: 33px;
	font-weight: 500;
	line-height: 48px;
`;

const Blue = styled.span`
	color: #45aeee;
`;

const DarkPool = styled.a`
	margin-left: auto;
	color: #4a90e2;
	font-size: 36px;
	line-height: 48px;
	text-decoration: none;
`;

const Dea = styled.span`
	flex-basis: 100%;
	color: #ec7644;
	font-size: 33px;
	font-weight: 500;
	line-height: 32px;
`;

const Spacer = styled.div`
	height: 36px;
`;

const SectionTabs = styled.nav`
	display: grid;
	grid-template-columns: repeat(6, 1fr);
	height: 122px;
	border-bottom: 2px solid #c8c8c8;
`;

const SectionTab = styled.button<{ $active: boolean }>`
	position: relative;
	padding-bottom: 4px;
	color: ${(props) => (props.$active ? "#333" : "#666")};
	font-size: ${(props) => (props.$active ? "50px" : "44px")};
	font-weight: ${(props) => (props.$active ? 700 : 400)};

	&::after {
		content: "";
		display: ${(props) => (props.$active ? "block" : "none")};
		position: absolute;
		bottom: 0;
		left: calc(50% - 30px);
		width: 60px;
		height: 12px;
		border-radius: 6px;
		background: #fb3b30;
	}
`;

const BottomBar = styled.footer`
	margin-top: auto;
	padding-bottom: 3px;
	background: #262626;
	color: #ccc;
`;

const BottomNav = styled.nav`
	display: grid;
	grid-template-columns: 248fr repeat(4, 208fr);
	height: 143px;
`;

const Sector = styled.button`
	display: flex;
	flex-direction: column;
	align-items: center;
	gap: 4px;
	padding-top: 11px;
	font-size: 36px;
	line-height: 60px;
`;

const SectorChange = styled.span`
	color: #ff1010;
	font-size: 35px;
`;

const NavButton = styled.button`
	display: flex;
	flex-direction: column;
	align-items: center;
	gap: 9px;
	padding-top: 20px;
	font-size: 35px;
	line-height: 46px;
`;

const HomeBar = styled.div`
	display: flex;
	gap: 6px;
	margin: 0 120px;
	border-radius: 4px;
	overflow: hidden;
`;

const HomeSegment = styled.i<{ $grow: number }>`
	flex: ${(props) => props.$grow};
	height: 7px;
	background: #666;
`;

export default App;
